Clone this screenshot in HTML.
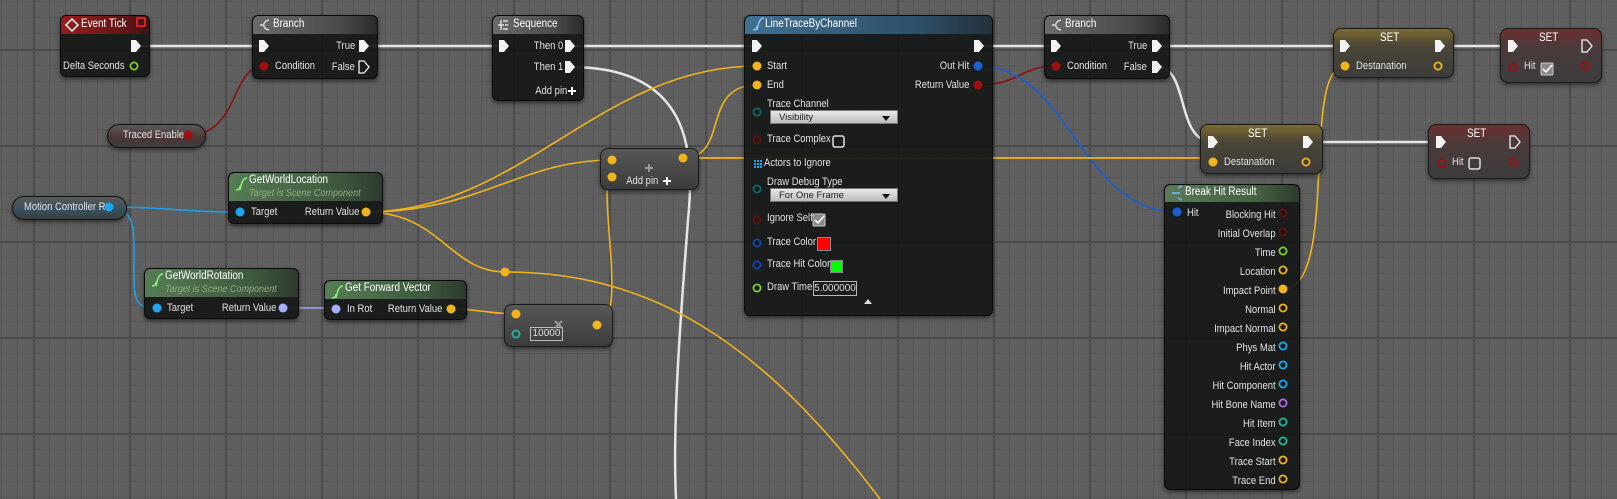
<!DOCTYPE html>
<html><head><meta charset="utf-8">
<style>
html,body{margin:0;padding:0;}
body{width:1617px;height:499px;overflow:hidden;position:relative;font-family:"Liberation Sans",sans-serif;
background-color:#5f5f5f;
background-image:
linear-gradient(to right,#4b4b4b 0,#4b4b4b 2px,transparent 2px),
linear-gradient(to bottom,#4b4b4b 0,#4b4b4b 2px,transparent 2px),
linear-gradient(to right,#585858 0,#585858 1px,transparent 1px),
linear-gradient(to bottom,#585858 0,#585858 1px,transparent 1px);
background-size:96px 96px,96px 96px,16px 16px,16px 16px;
background-position:33px 0,0 49px,1px 0,0 1px;}
svg{position:absolute;left:0;top:0;}
.n{position:absolute;background:rgba(22,23,23,0.93);border:1px solid #0b0b0b;border-radius:6px;box-shadow:0 2px 4px rgba(0,0,0,.55);overflow:hidden;}
.h{position:absolute;left:0;right:0;top:0;height:18px;border-radius:5px 5px 0 0;}
.t{position:absolute;font-size:11px;line-height:14px;color:#e2e2e2;white-space:nowrap;transform:scaleX(0.86);transform-origin:left center;}
.b{color:#fff;font-size:11.5px;}
.r{text-align:right;transform-origin:right center;}
.sub{font-style:italic;color:#93a985;font-size:10.5px;}
.dd{position:absolute;height:14px;background:linear-gradient(#e8e8e8,#bdbdbd);border:1px solid #777;font-size:9.5px;color:#222;line-height:14px;padding-left:8px;box-sizing:border-box;}
.dd:after{content:"";position:absolute;right:7px;top:5px;border-left:4px solid transparent;border-right:4px solid transparent;border-top:5px solid #111;}
.pill{position:absolute;border-radius:12px;border:1px solid #111;box-shadow:0 2px 4px rgba(0,0,0,.5);}
.gset{position:absolute;border-radius:8px;border:1px solid #1a1a1a;box-shadow:0 2px 4px rgba(0,0,0,.5);background:rgba(60,60,60,0.92);}
</style></head><body>

<svg width="1617" height="499" fill="none" stroke-linecap="round">
<g stroke="#e6e6e6" stroke-width="2.5">
<path d="M136,46 H264"/><path d="M364,46 H504"/><path d="M570,46 H756"/><path d="M979,46 H1056"/>
<path d="M1157,46 H1345"/><path d="M1440,46 H1513"/><path d="M1308,142 H1441"/>
<path d="M1157,67 C1190,67 1175,142 1213,142"/>
<path d="M570,67 C690,67 695,150 688,220 C682,300 672,420 676,499"/>
</g>
<g stroke="#8c0f0f" stroke-width="1.6">
<path d="M188,135 C240,135 230,66 264,66"/>
<path d="M978,85 C1020,85 1020,66 1056,66"/>
</g>
<g stroke="#1f9ee6" stroke-width="1.6">
<path d="M109,207 C170,207 180,212 240,212"/>
<path d="M109,207 C140,207 133,240 134,280 C134,305 140,308 157,308"/>
</g>
<path d="M978,66 C1070,66 1080,212 1177,212" stroke="#1b5fd6" stroke-width="1.6"/>
<path d="M283,308 H336" stroke="#9aa4f4" stroke-width="1.6"/>
<g stroke="#f2b41c" stroke-width="1.6">
<path d="M451,309 C480,309 490,314 516,314"/>
<path d="M366,212 C520,212 600,66 757,66"/>
<path d="M366,212 C480,212 520,160 612,160"/>
<path d="M366,212 C440,212 450,272 505,272 C650,272 760,340 880,499"/>
<path d="M597,325 C630,325 595,177 612,177"/>
<path d="M683,158 C730,158 700,85 757,85"/>
<path d="M683,158 H1213" stroke-width="1.8"/>
<path d="M1283,289 C1340,289 1300,66 1345,66"/>
</g>
<circle cx="505" cy="272" r="4.5" fill="#f2b41c"/>
</svg>

<div class="n" style="left:60px;top:15px;width:88px;height:60px;"><div class="h" style="background:linear-gradient(90deg,#9a1c1c,#5a1515 80%,#3a1515);"></div></div>
<div class="n" style="left:252px;top:15px;width:124px;height:62px;"><div class="h" style="background:linear-gradient(90deg,#6a6a6a,#4a4a4a 70%,#2a2a2a);"></div></div>
<div class="n" style="left:492px;top:15px;width:90px;height:84px;"><div class="h" style="background:linear-gradient(90deg,#6a6a6a,#4a4a4a 70%,#2a2a2a);"></div></div>
<div class="n" style="left:744px;top:15px;width:247px;height:299px;"><div class="h" style="background:linear-gradient(90deg,#3f6f92,#2d4f68 70%,#23313c);"></div></div>
<div class="n" style="left:1044px;top:15px;width:124px;height:62px;"><div class="h" style="background:linear-gradient(90deg,#6a6a6a,#4a4a4a 70%,#2a2a2a);"></div></div>
<div class="n" style="left:228px;top:172px;width:153px;height:50px;"><div class="h" style="height:28px;background:linear-gradient(90deg,#567d55,#3e5a3e 70%,#2e3a2e);"></div></div>
<div class="n" style="left:144px;top:268px;width:153px;height:49px;"><div class="h" style="height:28px;background:linear-gradient(90deg,#567d55,#3e5a3e 70%,#2e3a2e);"></div></div>
<div class="n" style="left:324px;top:280px;width:141px;height:38px;"><div class="h" style="background:linear-gradient(90deg,#567d55,#3e5a3e 70%,#2e3a2e);"></div></div>
<div class="n" style="left:1164px;top:184px;width:134px;height:304px;"><div class="h" style="height:17px;background:linear-gradient(90deg,#5a7a58,#43603f 70%,#2e3a2e);"></div></div>

<div class="pill" style="left:107px;top:124px;width:97px;height:22px;background:linear-gradient(180deg,#5a5a5a,#4a3434 60%,#3e3e3e);"></div>
<div class="pill" style="left:12px;top:196px;width:113px;height:22px;background:linear-gradient(180deg,#5a5a5a,#34505e 60%,#3e3e3e);"></div>
<div class="gset" style="left:600px;top:148px;width:97px;height:40px;background:linear-gradient(#575757,#3c3c3c);"></div>
<div class="gset" style="left:504px;top:304px;width:107px;height:41px;background:linear-gradient(#575757,#3c3c3c);"></div>
<div class="gset" style="left:1333px;top:28px;width:119px;height:48px;background:linear-gradient(180deg,#7a6a2e,#4a4536 35%,#3c3c3c);"></div>
<div class="gset" style="left:1200px;top:124px;width:121px;height:48px;background:linear-gradient(180deg,#7a6a2e,#4a4536 35%,#3c3c3c);"></div>
<div class="gset" style="left:1500px;top:28px;width:100px;height:53px;background:linear-gradient(180deg,#6e2e2e,#4a3a3a 35%,#3c3c3c);"></div>
<div class="gset" style="left:1428px;top:124px;width:100px;height:53px;background:linear-gradient(180deg,#6e2e2e,#4a3a3a 35%,#3c3c3c);"></div>

<div class="t b" style="left:81px;top:17px;">Event Tick</div>
<div class="t r" style="right:1492px;top:59px;">Delta Seconds</div>
<div class="t b" style="left:273px;top:17px;">Branch</div>
<div class="t r" style="right:1262px;top:39px;">True</div>
<div class="t" style="left:275px;top:59px;">Condition</div>
<div class="t r" style="right:1262px;top:60px;">False</div>
<div class="t" style="left:123px;top:128px;">Traced Enable</div>
<div class="t b" style="left:513px;top:17px;">Sequence</div>
<div class="t r" style="right:1054px;top:39px;">Then 0</div>
<div class="t r" style="right:1054px;top:60px;">Then 1</div>
<div class="t r" style="right:1050px;top:84px;">Add pin</div>
<div class="t b" style="left:765px;top:17px;">LineTraceByChannel</div>
<div class="t" style="left:767px;top:59px;">Start</div>
<div class="t" style="left:767px;top:78px;">End</div>
<div class="t r" style="right:648px;top:59px;">Out Hit</div>
<div class="t r" style="right:648px;top:78px;">Return Value</div>
<div class="t" style="left:767px;top:97px;">Trace Channel</div>
<div class="dd" style="left:770px;top:110px;width:128px;">Visibility</div>
<div class="t" style="left:767px;top:132px;">Trace Complex</div>
<div class="t" style="left:764px;top:156px;">Actors to Ignore</div>
<div class="t" style="left:767px;top:175px;">Draw Debug Type</div>
<div class="dd" style="left:770px;top:188px;width:128px;">For One Frame</div>
<div class="t" style="left:767px;top:211px;">Ignore Self</div>
<div class="t" style="left:767px;top:235px;">Trace Color</div>
<div style="position:absolute;left:817px;top:237px;width:12px;height:12px;background:#f00;border:1px solid #888;"></div>
<div class="t" style="left:767px;top:257px;">Trace Hit Color</div>
<div style="position:absolute;left:830px;top:260px;width:11px;height:11px;background:#0f0;border:1px solid #888;"></div>
<div class="t" style="left:767px;top:280px;">Draw Time</div>
<div style="position:absolute;left:813px;top:281px;width:42px;height:13px;border:1px solid #bbb;font-size:10px;line-height:13px;text-align:center;color:#ddd;">5.000000</div>
<div class="t b" style="left:1065px;top:17px;">Branch</div>
<div class="t" style="left:1067px;top:59px;">Condition</div>
<div class="t r" style="right:470px;top:39px;">True</div>
<div class="t r" style="right:470px;top:60px;">False</div>
<div class="t b" style="left:249px;top:173px;">GetWorldLocation</div>
<div class="t sub" style="left:249px;top:186px;">Target is Scene Component</div>
<div class="t" style="left:251px;top:205px;">Target</div>
<div class="t r" style="right:1258px;top:205px;">Return Value</div>
<div class="t" style="left:24px;top:200px;">Motion Controller R</div>
<div class="t b" style="left:165px;top:269px;">GetWorldRotation</div>
<div class="t sub" style="left:165px;top:282px;">Target is Scene Component</div>
<div class="t" style="left:167px;top:301px;">Target</div>
<div class="t r" style="right:1341px;top:301px;">Return Value</div>
<div class="t b" style="left:345px;top:281px;">Get Forward Vector</div>
<div class="t" style="left:347px;top:302px;">In Rot</div>
<div class="t r" style="right:1175px;top:302px;">Return Value</div>
<div class="t r" style="right:959px;top:174px;">Add pin</div>
<div style="position:absolute;left:530px;top:327px;width:31px;height:12px;border:1px solid #bbb;font-size:10px;line-height:12px;text-align:center;color:#ddd;">10000</div>
<div class="t b" style="left:1380px;top:31px;">SET</div>
<div class="t" style="left:1356px;top:59px;">Destanation</div>
<div class="t b" style="left:1248px;top:127px;">SET</div>
<div class="t" style="left:1224px;top:155px;">Destanation</div>
<div class="t b" style="left:1539px;top:31px;">SET</div>
<div class="t" style="left:1524px;top:59px;">Hit</div>
<div class="t b" style="left:1467px;top:127px;">SET</div>
<div class="t" style="left:1452px;top:155px;">Hit</div>
<div class="t b" style="left:1185px;top:185px;">Break Hit Result</div>
<div class="t" style="left:1187px;top:206px;">Hit</div>
<div class="t r" style="right:341px;top:206px;line-height:19px;">Blocking Hit<br>Initial Overlap<br>Time<br>Location<br>Impact Point<br>Normal<br>Impact Normal<br>Phys Mat<br>Hit Actor<br>Hit Component<br>Hit Bone Name<br>Hit Item<br>Face Index<br>Trace Start<br>Trace End</div>

<svg width="1617" height="499">
<defs>
<path id="ex" d="M-5,-6 H0 L5,0 L0,6 H-5 Z"/>
</defs>
<g fill="#f2f2f2">
<use href="#ex" x="136" y="46"/><use href="#ex" x="264" y="46"/><use href="#ex" x="364" y="46"/>
<use href="#ex" x="504" y="46"/><use href="#ex" x="570" y="46"/><use href="#ex" x="570" y="67"/>
<use href="#ex" x="757" y="46"/><use href="#ex" x="979" y="46"/><use href="#ex" x="1056" y="46"/>
<use href="#ex" x="1157" y="46"/><use href="#ex" x="1157" y="67"/><use href="#ex" x="1345" y="46"/>
<use href="#ex" x="1440" y="46"/><use href="#ex" x="1513" y="46"/><use href="#ex" x="1213" y="142"/>
<use href="#ex" x="1308" y="142"/><use href="#ex" x="1441" y="142"/>
</g>
<g fill="none" stroke="#f2f2f2" stroke-width="1.3">
<use href="#ex" x="364" y="67"/><use href="#ex" x="1587" y="46"/><use href="#ex" x="1515" y="142"/>
</g>
<g fill="#f2b41c">
<circle cx="366" cy="212" r="4.5"/><circle cx="451" cy="309" r="4.5"/><circle cx="516" cy="314" r="4.5"/>
<circle cx="597" cy="325" r="4.5"/><circle cx="612" cy="160" r="4.5"/><circle cx="612" cy="177" r="4.5"/>
<circle cx="683" cy="158" r="4.5"/><circle cx="757" cy="66" r="4.5"/><circle cx="757" cy="85" r="4.5"/>
<circle cx="1345" cy="66" r="4.5"/><circle cx="1213" cy="162" r="4.5"/><circle cx="1283" cy="289" r="4.5"/>
</g>
<circle cx="188" cy="135" r="4.5" fill="#a00f0f"/><circle cx="264" cy="66" r="4.5" fill="#a00f0f"/>
<circle cx="978" cy="85" r="4.5" fill="#a00f0f"/><circle cx="1056" cy="66" r="4.5" fill="#a00f0f"/>
<circle cx="109" cy="207" r="4.5" fill="#1aa8f2"/><circle cx="240" cy="212" r="4.5" fill="#1aa8f2"/><circle cx="157" cy="308" r="4.5" fill="#1aa8f2"/>
<circle cx="978" cy="66" r="4.5" fill="#1b5fd6"/><circle cx="1177" cy="212" r="4.5" fill="#1b5fd6"/>
<circle cx="283" cy="308" r="4.5" fill="#a5aef8"/><circle cx="336" cy="309" r="4.5" fill="#a5aef8"/>
<g fill="none" stroke-width="1.8">
<circle cx="134" cy="66" r="3.6" stroke="#7ad12a"/>
<circle cx="757" cy="112" r="3.6" stroke="#0b6b66"/>
<circle cx="757" cy="140" r="3.6" stroke="#6a0d0d"/>
<circle cx="757" cy="189" r="3.6" stroke="#0b6b66"/>
<circle cx="757" cy="220" r="3.6" stroke="#6a0d0d"/>
<circle cx="757" cy="243" r="3.6" stroke="#0c49b0"/>
<circle cx="757" cy="265" r="3.6" stroke="#0c49b0"/>
<circle cx="757" cy="288" r="3.6" stroke="#7ad12a"/>
<circle cx="516" cy="334" r="3.6" stroke="#1fb79c"/>
<circle cx="1438" cy="66" r="3.6" stroke="#f2b41c"/>
<circle cx="1306" cy="162" r="3.6" stroke="#f2b41c"/>
<circle cx="1513" cy="67" r="3.6" stroke="#a00f0f"/><circle cx="1585" cy="66" r="3.6" stroke="#a00f0f"/>
<circle cx="1442" cy="163" r="3.6" stroke="#a00f0f"/><circle cx="1513" cy="162" r="3.6" stroke="#a00f0f"/>
<circle cx="1283" cy="213" r="3.6" stroke="#6a0d0d"/><circle cx="1283" cy="232" r="3.6" stroke="#6a0d0d"/>
<circle cx="1283" cy="251" r="3.6" stroke="#7ad12a"/><circle cx="1283" cy="270" r="3.6" stroke="#f2b41c"/>
<circle cx="1283" cy="308" r="3.6" stroke="#f2b41c"/><circle cx="1283" cy="327" r="3.6" stroke="#f2b41c"/>
<circle cx="1283" cy="346" r="3.6" stroke="#1aa8f2"/><circle cx="1283" cy="365" r="3.6" stroke="#1aa8f2"/>
<circle cx="1283" cy="384" r="3.6" stroke="#1aa8f2"/><circle cx="1283" cy="403" r="3.6" stroke="#b366e6"/>
<circle cx="1283" cy="422" r="3.6" stroke="#1fb79c"/><circle cx="1283" cy="441" r="3.6" stroke="#1fb79c"/>
<circle cx="1283" cy="460" r="3.6" stroke="#f2b41c"/><circle cx="1283" cy="479" r="3.6" stroke="#f2b41c"/>
</g>
<rect x="833" y="136" width="11" height="11" rx="2" fill="none" stroke="#ddd" stroke-width="1.5"/>
<rect x="813" y="214" width="12" height="12" rx="1" fill="#888" stroke="#ccc"/>
<path d="M815,220 l3,3 l6,-7" stroke="#fff" stroke-width="1.6" fill="none"/>
<rect x="1541" y="63" width="12" height="12" rx="1" fill="#888" stroke="#ccc"/>
<path d="M1543,69 l3,3 l6,-7" stroke="#fff" stroke-width="1.6" fill="none"/>
<rect x="1469" y="158" width="11" height="11" rx="2" fill="none" stroke="#ddd" stroke-width="1.5"/>
<rect x="137" y="18" width="8" height="8" fill="none" stroke="#f22" stroke-width="1.6"/>
<path d="M72,19 L78,25 L72,31 L66,25 Z" fill="none" stroke="#fff" stroke-width="1.5"/>
<path d="M269,20 C262,21 262,29 269,30 M263,25 H260" fill="none" stroke="#ddd" stroke-width="1.4"/>
<path d="M1061,20 C1054,21 1054,29 1061,30 M1055,25 H1052" fill="none" stroke="#ddd" stroke-width="1.4"/>
<path d="M501,20 V30 M498,25 H504 M503,21 H508 M505,25 H508 M503,29 H508" stroke="#ddd" stroke-width="1.4" fill="none"/>
<path d="M568,91 H576 M572,87 V95" stroke="#fff" stroke-width="2"/>
<path d="M663,181 H671 M667,177 V185" stroke="#fff" stroke-width="2"/>
<path d="M645,168 H653 M649,164 V172" stroke="#999" stroke-width="2"/>
<path d="M555,321 L562,328 M562,321 L555,328" stroke="#999" stroke-width="2"/>
<path d="M864,304 L872,304 L868,299 Z" fill="#ddd"/>
<g fill="#1aa8f2"><rect x="754" y="160" width="2" height="2"/><rect x="757" y="160" width="2" height="2"/><rect x="760" y="160" width="2" height="2"/><rect x="754" y="163" width="2" height="2"/><rect x="757" y="163" width="2" height="2"/><rect x="760" y="163" width="2" height="2"/><rect x="754" y="166" width="2" height="2"/><rect x="757" y="166" width="2" height="2"/><rect x="760" y="166" width="2" height="2"/></g>
<g stroke="#8fef7a" stroke-width="1.5" fill="none">
<path d="M240,190 C242,180 244,178 247,178"/><path d="M236,190 C239,190 240,188 240,186"/>
<path d="M156,286 C158,276 160,274 163,274"/><path d="M152,286 C155,286 156,284 156,282"/>
<path d="M336,298 C338,288 340,286 343,286"/><path d="M332,298 C335,298 336,296 336,294"/>
</g>
<g stroke="#8fc8ef" stroke-width="1.5" fill="none">
<path d="M757,30 C759,20 761,18 764,18"/><path d="M753,30 C756,30 757,28 757,26"/>
</g>
<path d="M1172,193 H1180 M1178,188 L1182,186 M1178,198 L1182,200" stroke="#6fa8e0" stroke-width="2" fill="none"/>
</svg>
</body></html>
